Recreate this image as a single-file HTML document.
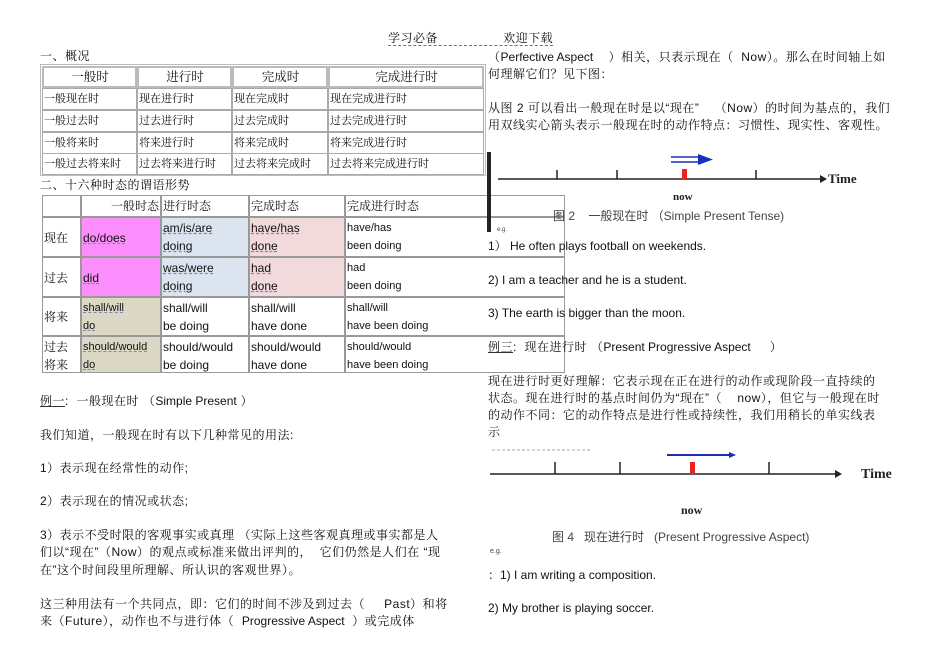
<!DOCTYPE html>
<html><head><meta charset="utf-8"><style>
body{margin:0;background:#fff;width:950px;height:672px;position:relative;overflow:hidden;font-family:"Liberation Sans","Noto Serif CJK SC",serif;font-size:12px;color:#111}
.t{position:absolute;white-space:nowrap;line-height:14px;letter-spacing:0.5px}
.e{letter-spacing:0}
.c{position:absolute;box-sizing:border-box;border:1px solid #aaa;padding-left:1px;line-height:20px;white-space:nowrap}
.d{position:absolute;box-sizing:border-box;border:1px solid #999;padding:1px 1px;line-height:18px;white-space:nowrap;font-size:12px}
.s{font-size:11px}
u{text-decoration:underline dashed #88a}
.en{letter-spacing:0}
</style></head><body>
<div class="t" style="left:388px;top:31px;border-bottom:1px dashed #66c">学习必备&nbsp;&nbsp;&nbsp;&nbsp;&nbsp;&nbsp;&nbsp;&nbsp;&nbsp;&nbsp;&nbsp;&nbsp;&nbsp;&nbsp;&nbsp;&nbsp;&nbsp;欢迎下载</div>
<div class="t" style="left:40px;top:49px">一、概况</div>
<div style="position:absolute;left:40px;top:64px;width:446px;height:112px;border:1px solid #bbb;box-sizing:border-box"></div>
<div class="c" style="left:42px;top:66px;width:95px;height:22px;text-align:center;border:2px solid #bbb;line-height:18px;font-size:12.5px">一般时</div>
<div class="c" style="left:137px;top:66px;width:95px;height:22px;text-align:center;border:2px solid #bbb;line-height:18px;font-size:12.5px">进行时</div>
<div class="c" style="left:232px;top:66px;width:96px;height:22px;text-align:center;border:2px solid #bbb;line-height:18px;font-size:12.5px">完成时</div>
<div class="c" style="left:328px;top:66px;width:156px;height:22px;text-align:center;border:2px solid #bbb;line-height:18px;font-size:12.5px">完成进行时</div>
<div class="c s" style="left:42px;top:88px;width:95px;height:22px">一般现在时</div><div class="c s" style="left:137px;top:88px;width:95px;height:22px">现在进行时</div><div class="c s" style="left:232px;top:88px;width:96px;height:22px">现在完成时</div><div class="c s" style="left:328px;top:88px;width:156px;height:22px">现在完成进行时</div>
<div class="c s" style="left:42px;top:110px;width:95px;height:22px">一般过去时</div><div class="c s" style="left:137px;top:110px;width:95px;height:22px">过去进行时</div><div class="c s" style="left:232px;top:110px;width:96px;height:22px">过去完成时</div><div class="c s" style="left:328px;top:110px;width:156px;height:22px">过去完成进行时</div>
<div class="c s" style="left:42px;top:132px;width:95px;height:22px">一般将来时</div><div class="c s" style="left:137px;top:132px;width:95px;height:22px">将来进行时</div><div class="c s" style="left:232px;top:132px;width:96px;height:22px">将来完成时</div><div class="c s" style="left:328px;top:132px;width:156px;height:22px">将来完成进行时</div>
<div class="c s" style="left:42px;top:153px;width:95px;height:22px">一般过去将来时</div><div class="c s" style="left:137px;top:153px;width:95px;height:22px">过去将来进行时</div><div class="c s" style="left:232px;top:153px;width:96px;height:22px">过去将来完成时</div><div class="c s" style="left:328px;top:153px;width:156px;height:22px">过去将来完成进行时</div>
<div class="t" style="left:40px;top:178px">二、十六种时态的谓语形势</div>

<div class="d" style="left:42px;top:195px;width:39px;height:22px"></div>
<div class="d" style="left:81px;top:195px;width:80px;height:22px;text-align:right">一般时态</div>
<div class="d" style="left:161px;top:195px;width:88px;height:22px">进行时态</div>
<div class="d" style="left:249px;top:195px;width:96px;height:22px">完成时态</div>
<div class="d" style="left:345px;top:195px;width:220px;height:22px">完成进行时态</div>

<div class="d" style="left:42px;top:217px;width:39px;height:40px;line-height:38px">现在</div>
<div class="d" style="left:81px;top:217px;width:80px;height:40px;background:#fd8efd;line-height:38px"><u>do/does</u></div>
<div class="d" style="left:161px;top:217px;width:88px;height:40px;background:#dbe4ef"><u>am/is/are</u><br><u>doing</u></div>
<div class="d" style="left:249px;top:217px;width:96px;height:40px;background:#f1d9dc"><u>have/has</u><br><u>done</u></div>
<div class="d s" style="left:345px;top:217px;width:220px;height:40px">have/has<br>been doing</div>

<div class="d" style="left:42px;top:257px;width:39px;height:40px;line-height:38px">过去</div>
<div class="d" style="left:81px;top:257px;width:80px;height:40px;background:#fd8efd;line-height:38px"><u>did</u></div>
<div class="d" style="left:161px;top:257px;width:88px;height:40px;background:#dbe4ef"><u>was/were</u><br><u>doing</u></div>
<div class="d" style="left:249px;top:257px;width:96px;height:40px;background:#f1d9dc"><u>had</u><br><u>done</u></div>
<div class="d s" style="left:345px;top:257px;width:220px;height:40px">had<br>been doing</div>

<div class="d" style="left:42px;top:297px;width:39px;height:39px;line-height:37px">将来</div>
<div class="d s" style="left:81px;top:297px;width:80px;height:39px;background:#dcd8c6"><u>shall/will</u><br><u>do</u></div>
<div class="d" style="left:161px;top:297px;width:88px;height:39px">shall/will<br>be doing</div>
<div class="d" style="left:249px;top:297px;width:96px;height:39px">shall/will<br>have done</div>
<div class="d s" style="left:345px;top:297px;width:220px;height:39px">shall/will<br>have been doing</div>

<div class="d" style="left:42px;top:336px;width:39px;height:37px">过去<br>将来</div>
<div class="d s" style="left:81px;top:336px;width:80px;height:37px;background:#dcd8c6"><u>should/would</u><br><u>do</u></div>
<div class="d" style="left:161px;top:336px;width:88px;height:37px">should/would<br>be doing</div>
<div class="d" style="left:249px;top:336px;width:96px;height:37px">should/would<br>have done</div>
<div class="d s" style="left:345px;top:336px;width:220px;height:37px">should/would<br>have been doing</div>

<div class="t" style="left:40px;top:394px"><u style="text-decoration:underline solid #333">例一</u>:&nbsp; 一般现在时 （<span class="en">Simple Present</span> ）</div>
<div class="t" style="left:40px;top:428px">我们知道，一般现在时有以下几种常见的用法:</div>
<div class="t" style="left:40px;top:461px">1）表示现在经常性的动作;</div>
<div class="t" style="left:40px;top:494px">2）表示现在的情况或状态;</div>
<div class="t" style="left:40px;top:528px">3）表示不受时限的客观事实或真理 （实际上这些客观真理或事实都是人</div>
<div class="t" style="left:40px;top:545px">们以“现在”（Now）的观点或标准来做出评判的，&nbsp; 它们仍然是人们在 “现</div>
<div class="t" style="left:40px;top:563px">在”这个时间段里所理解、所认识的客观世界）。</div>
<div class="t" style="left:40px;top:597px">这三种用法有一个共同点，即：它们的时间不涉及到过去（&nbsp;&nbsp;&nbsp;&nbsp; Past）和将</div>
<div class="t" style="left:40px;top:614px">来（Future），动作也不与进行体（&nbsp; <span class="en">Progressive Aspect</span>&nbsp; ）或完成体</div>

<div class="t" style="left:488px;top:50px">（<span class="en">Perfective Aspect</span>&nbsp;&nbsp;&nbsp; ）相关，只表示现在（&nbsp; Now）。那么在时间轴上如</div>
<div class="t" style="left:488px;top:67px">何理解它们？见下图：</div>
<div class="t" style="left:488px;top:101px">从图 2 可以看出一般现在时是以“现在”&nbsp;&nbsp;&nbsp; （Now）的时间为基点的，我们</div>
<div class="t" style="left:488px;top:118px">用双线实心箭头表示一般现在时的动作特点：习惯性、现实性、客观性。</div>

<div style="position:absolute;left:487px;top:152px;width:4px;height:80px;background:#222"></div>
<svg style="position:absolute;left:480px;top:140px" width="420" height="100">
<line x1="18" y1="39" x2="340" y2="39" stroke="#222" stroke-width="1.5"/><polygon points="340,35 347,39 340,43" fill="#222"/>
<line x1="77" y1="30" x2="77" y2="39" stroke="#222" stroke-width="1.5"/>
<line x1="137" y1="30" x2="137" y2="39" stroke="#222" stroke-width="1.5"/>
<line x1="276" y1="30" x2="276" y2="39" stroke="#222" stroke-width="1.5"/>
<rect x="202" y="29" width="5" height="10" fill="#e22"/>
<line x1="191" y1="17" x2="222" y2="17" stroke="#1a2fb5" stroke-width="1.5"/>
<line x1="191" y1="22" x2="222" y2="22" stroke="#1a2fb5" stroke-width="1.5"/>
<polygon points="218,14 233,19.5 218,25" fill="#1a2fb5"/>
<text x="348" y="43" font-family="Liberation Serif" font-weight="bold" font-size="13" fill="#222">Time</text>
<text x="193" y="60" font-family="Liberation Serif" font-weight="bold" font-size="11" fill="#222">now</text>
<text x="73" y="80" font-size="12" fill="#444" font-family="Liberation Sans,Noto Sans CJK SC,sans-serif">图 2&nbsp;&nbsp;&nbsp; 一般现在时 （Simple Present Tense)</text>
<text x="17" y="91" font-size="6" fill="#444">e.g.</text>
</svg>
<div class="t e" style="left:488px;top:239px">1） He often plays football on weekends.</div>
<div class="t e" style="left:488px;top:273px">2) I am a teacher and he is a student.</div>
<div class="t e" style="left:488px;top:306px">3) The earth is bigger than the moon.</div>
<div class="t" style="left:488px;top:340px"><u style="text-decoration:underline solid #333">例三</u>:&nbsp; 现在进行时 （<span class="en">Present Progressive Aspect</span>&nbsp;&nbsp;&nbsp;&nbsp; ）</div>
<div class="t" style="left:488px;top:374px">现在进行时更好理解：它表示现在正在进行的动作或现阶段一直持续的</div>
<div class="t" style="left:488px;top:391px">状态。现在进行时的基点时间仍为“现在”（&nbsp;&nbsp;&nbsp; now），但它与一般现在时</div>
<div class="t" style="left:488px;top:408px">的动作不同：它的动作特点是进行性或持续性，我们用稍长的单实线表</div>
<div class="t" style="left:488px;top:425px">示</div>
<svg style="position:absolute;left:480px;top:440px" width="440" height="120">
<line x1="12" y1="10" x2="110" y2="10" stroke="#aaa" stroke-width="1" stroke-dasharray="3,2"/>
<line x1="10" y1="34" x2="355" y2="34" stroke="#222" stroke-width="1.5"/><polygon points="355,30 362,34 355,38" fill="#222"/>
<line x1="75" y1="22" x2="75" y2="34" stroke="#222" stroke-width="1.5"/>
<line x1="140" y1="22" x2="140" y2="34" stroke="#222" stroke-width="1.5"/>
<line x1="289" y1="22" x2="289" y2="34" stroke="#222" stroke-width="1.5"/>
<rect x="210" y="22" width="5" height="12" fill="#e22"/>
<line x1="187" y1="15" x2="250" y2="15" stroke="#1a2fb5" stroke-width="2"/>
<polygon points="249,12 256,15 249,18" fill="#1a2fb5"/>
<text x="381" y="38" font-family="Liberation Serif" font-weight="bold" font-size="14" fill="#222">Time</text>
<text x="201" y="74" font-family="Liberation Serif" font-weight="bold" font-size="12" fill="#222">now</text>
<text x="72" y="101" font-size="12" fill="#444" font-family="Liberation Sans,Noto Sans CJK SC,sans-serif">图 4&nbsp;&nbsp; 现在进行时&nbsp;&nbsp; (Present Progressive Aspect)</text>
<text x="10" y="113" font-size="7" fill="#444">e.g.</text>
</svg>
<div class="t e" style="left:488px;top:568px">：1) I am writing a composition.</div>
<div class="t e" style="left:488px;top:601px">2) My brother is playing soccer.</div>
</body></html>
